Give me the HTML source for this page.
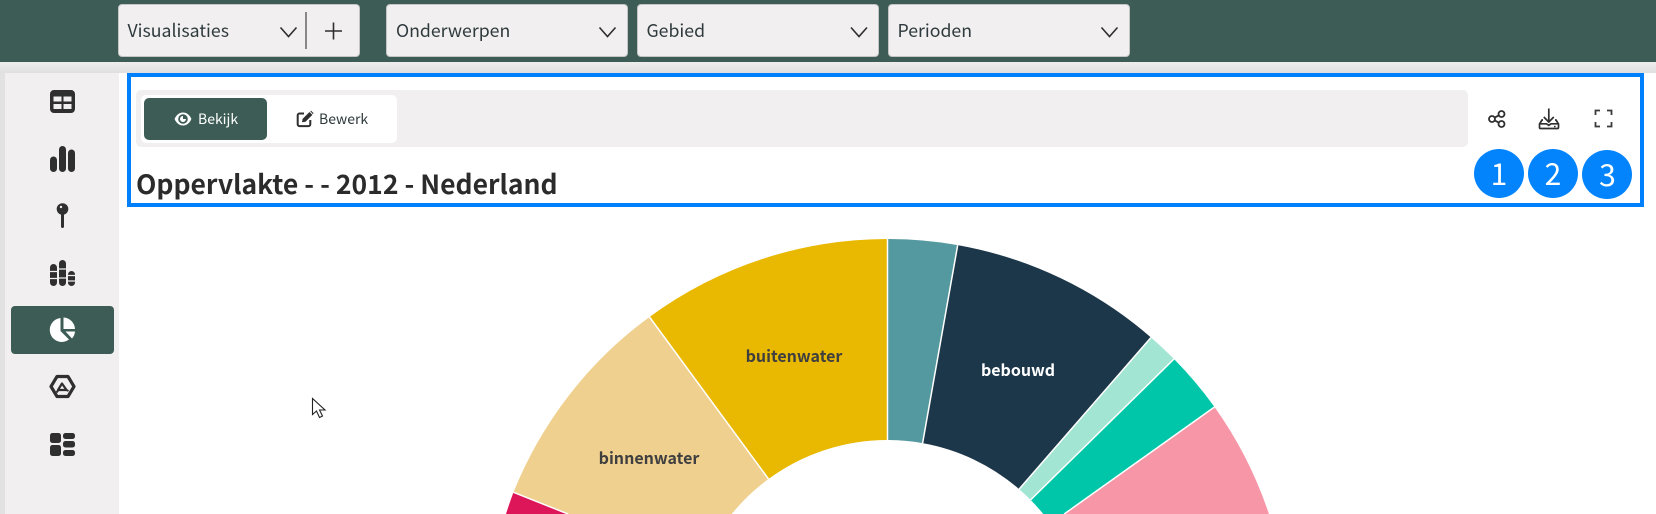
<!DOCTYPE html>
<html lang="nl"><head><meta charset="utf-8"><title>Oppervlakte</title>
<style>
*{box-sizing:border-box;margin:0;padding:0}
html,body{width:1656px;height:514px;overflow:hidden;background:#fff}
body{position:relative;font-family:"Noto Sans CJK JP","Liberation Sans",sans-serif;color:#2f2f2f}
.a{position:absolute}
.t{position:absolute;white-space:nowrap}
.sel{position:absolute;top:4px;height:53px;background:#f1eff0;border:1px solid #c4c4c4;border-radius:4px}
.lbl{position:absolute;top:62px;height:11px;left:0;width:1656px;background:linear-gradient(#eeeeee,#dfdfdf)}
.st{font-size:17.700px;line-height:24px;top:18px;color:#2f3a3c}
svg{position:absolute;display:block}
</style></head><body>
<div class="a" style="left:0;top:0;width:1656px;height:62px;background:#3c5c55"></div>
<div class="lbl"></div>
<div class="a" style="left:0;top:73px;width:5px;height:441px;background:#e2e2e2"></div>
<div class="a" style="left:5px;top:73px;width:114px;height:441px;background:#f1eff0"></div>

<div class="sel" style="left:118px;width:242px"></div>
<div class="sel" style="left:386px;width:242px"></div>
<div class="sel" style="left:637px;width:242px"></div>
<div class="sel" style="left:888px;width:242px"></div>
<div class="t st" style="left:127.5px">Visualisaties</div>
<div class="t st" style="left:396px">Onderwerpen</div>
<div class="t st" style="left:646.5px">Gebied</div>
<div class="t st" style="left:897.5px">Perioden</div>
<svg style="left:0;top:0" width="1656" height="62" fill="none" stroke="#2f2f2f" stroke-width="1.600">
<path d="M280.500 27.500l8 9 8-9M599.500 27.500l8 9 8-9M851 27.500l8 9 8-9M1101.500 27.500l8 9 8-9"/>
<path d="M306 12v37" stroke="#6e6e6e" stroke-width="1.600"/>
<path d="M333.500 22.500v17M325 31h17" stroke-width="1.600"/>
</svg>

<!-- blue box -->
<div class="a" style="left:127px;top:73px;width:1517px;height:134px;border:4px solid #0080fd"></div>
<div class="a" style="left:136px;top:90px;width:1332px;height:57px;background:#f1eff0;border-radius:5px"></div>
<div class="a" style="left:141px;top:95px;width:256px;height:48px;background:#fff;border-radius:5px"></div>
<div class="a" style="left:144px;top:98px;width:123px;height:42px;background:#3c5c55;border-radius:5px"></div>
<svg style="left:174px;top:111px" width="18" height="16" viewBox="0 0 18 16"><path fill="#fff" fill-rule="evenodd" d="M9 1.500C5 1.500 1.800 4.700.6 8c1.200 3.300 4.400 6.500 8.400 6.500s7.200-3.200 8.400-6.500C16.200 4.700 13 1.500 9 1.500zM9 12.800A4.800 4.800 0 1 1 9 3.200a4.800 4.800 0 0 1 0 9.600zM9 5a3 3 0 1 0 3 3H9z"/></svg>
<div class="t" style="left:198px;top:109px;font-size:14px;line-height:20px;color:#fff">Bekijk</div>
<svg style="left:296px;top:110px" width="18" height="18" viewBox="0 0 18 18" fill="none"><path d="M8 3.500H3.500A1.800 1.800 0 0 0 1.700 5.300v9a1.800 1.800 0 0 0 1.800 1.800h9a1.800 1.800 0 0 0 1.800-1.800V10" stroke="#2f2f2f" stroke-width="2"/><path fill="#2f2f2f" d="M6 12.300l.6-3.400L13.500 2l2.900 2.900-6.900 6.900zM14.300 1.200l.7-.6 2.600 2.600-.7.900z"/></svg>
<div class="t" style="left:319px;top:109px;font-size:14px;line-height:20px;color:#2f3a3c">Bewerk</div>

<div class="t" style="left:136px;top:165px;font-size:26.500px;line-height:36px;font-weight:700;color:#2b2b2b">Oppervlakte - - 2012 - Nederland</div>

<!-- right icons -->
<svg style="left:1486px;top:108px" width="21" height="21" viewBox="0 0 21 21" fill="none" stroke="#2f2f2f" stroke-width="1.800"><circle cx="6" cy="11" r="3"/><circle cx="15.500" cy="6" r="3"/><circle cx="15.500" cy="16" r="3"/><path d="M8.700 9.600l4.100-2.200M8.700 12.400l4.100 2.200"/></svg>
<svg style="left:1538px;top:107px" width="22" height="23" viewBox="0 0 22 23" fill="none" stroke="#2f2f2f" stroke-width="1.700"><path d="M10.800 1.500v13.500M5.800 10l5 5 5-5"/><path d="M5 13H4L1.500 17v3.500a1 1 0 0 0 1 1h17a1 1 0 0 0 1-1V17L18 13h-1M2 16.800h6.500l2.300 1.500 2.300-1.500H20"/><circle cx="16.800" cy="19.500" r=".9" fill="#2f2f2f" stroke="none"/></svg>
<svg style="left:1594px;top:109px" width="19" height="19" viewBox="0 0 19 19" fill="none" stroke="#3a3a3a" stroke-width="1.800"><path d="M6 1.500H1.500V6M13 1.500h4.500V6M1.500 13v4.500H6M17.500 13v4.500H13"/></svg>

<!-- badges -->
<div class="a" style="left:1474px;top:149px;width:50px;height:49px;border-radius:50%;background:#0384fd"></div>
<div class="a" style="left:1528px;top:149px;width:50px;height:49px;border-radius:50%;background:#0384fd"></div>
<div class="a" style="left:1582px;top:150px;width:50px;height:49px;border-radius:50%;background:#0384fd"></div>
<div class="t" style="left:1474px;width:50px;top:152px;text-align:center;color:#fff;font-size:30px;line-height:40px">1</div>
<div class="t" style="left:1528px;width:50px;top:152px;text-align:center;color:#fff;font-size:30px;line-height:40px">2</div>
<div class="t" style="left:1582.500px;width:50px;top:152.500px;text-align:center;color:#fff;font-size:30px;line-height:40px">3</div>

<!-- sidebar -->
<div class="a" style="left:11px;top:306px;width:103px;height:48px;background:#3c5c55;border-radius:4px"></div>
<svg style="left:0;top:73px" width="119" height="441" viewBox="0 73 119 441" fill="#2f2f2f">
<path fill-rule="evenodd" d="M54 90h17a4 4 0 0 1 4 4v15a4 4 0 0 1-4 4H54a4 4 0 0 1-4-4V94a4 4 0 0 1 4-4zM53.500 96.500v5h8v-5zM63.500 96.500v5h8v-5zM53.500 104v5h8v-5zM63.500 104v5h8v-5z"/>
<rect x="50" y="156.500" width="7" height="15.500" rx="3.500"/><rect x="59" y="146" width="7" height="26" rx="3.500"/><rect x="68" y="149.500" width="7" height="22.500" rx="3.500"/>
<circle cx="62.500" cy="209" r="5.800"/><rect x="61" y="212" width="3" height="16" rx="1.500"/><circle cx="61" cy="207" r="1.200" fill="#f1eff0"/>
<g><rect x="50" y="264" width="7" height="22" rx="3.500"/><rect x="59" y="260" width="7" height="26" rx="3.500"/><rect x="68" y="271" width="7" height="15" rx="3.500"/>
<path d="M50 271.500h7M50 278.500h7M59 269h7M59 278h7M68 275.500h7M68 281h7" stroke="#f1eff0" stroke-width="1.300"/></g>
<path fill="#fff" d="M60.500 318v13l8.500 8.500a12 12 0 1 1-8.500-21.500zM63.500 317.500a12 12 0 0 1 11.500 11.500H63.500zM65.500 331.500h9.500a12 12 0 0 1-3 7z"/>
<path d="M57 376.500h11l6 10-6 10H57l-6-10z" fill="none" stroke="#2f2f2f" stroke-width="3.200" stroke-linejoin="round"/>
<path d="M62 383.500l4.500 6.500H58z" fill="none" stroke="#2f2f2f" stroke-width="2.200" stroke-linejoin="round"/>
<path d="M58 390.500l-1.500 2M66.500 390l2 1" stroke="#2f2f2f" stroke-width="2" fill="none"/>
<rect x="50" y="433" width="11" height="10" rx="2.500"/><rect x="50" y="445" width="11" height="11" rx="2.500"/><rect x="63" y="433" width="12" height="6" rx="2.500"/><rect x="63" y="441" width="12" height="6.500" rx="2.500"/><rect x="63" y="450" width="12" height="6" rx="2.500"/>
</svg>

<!-- donut -->
<svg style="left:0;top:0" width="1656" height="514" viewBox="0 0 1656 514">
<path fill="#e9b800" d="M887.500 239A402 402 0 0 0 649.500 317L768.500 479A201 201 0 0 1 887.500 440Z"/>
<path fill="#efd08f" d="M649.500 317A402 402 0 0 0 513.500 492.300L568 514L731.700 514A201 201 0 0 1 768.500 479Z"/>
<path fill="#dc1659" d="M513.500 492.300A402 402 0 0 0 506 514L568 514Z"/>
<path fill="#5499a0" d="M887.500 239A402 402 0 0 1 957.700 245.100L922.600 443.100A201 201 0 0 0 887.500 440Z"/>
<path fill="#1d374a" d="M957.700 245.100A402 402 0 0 1 1151 337.500L1019.100 489.100A201 201 0 0 0 922.600 443.100Z"/>
<path fill="#a2e5d2" d="M1151 337.500A402 402 0 0 1 1174 359L1030.600 499.900A201 201 0 0 0 1019.100 489.100Z"/>
<path fill="#00c6a9" d="M1174 359A402 402 0 0 1 1214.500 407L1064.200 514L1043.300 514A201 201 0 0 0 1030.600 499.900Z"/>
<path fill="#f796a7" d="M1214.500 407A402 402 0 0 1 1268.900 514L1064.200 514Z"/>
<path fill="none" stroke="#fff" stroke-width="1.500" d="M887.500 238V441M649.500 317L768.500 479M513.500 492.300L568 514M957.700 245.100L922.600 443.100M1151 337.500L1019.100 489.100M1174 359L1030.600 499.900M1214.500 407L1064.200 514"/>
</svg>
<div class="t" style="left:694px;width:200px;top:344px;text-align:center;font-size:16px;line-height:22px;font-weight:700;color:#3f3f3f">buitenwater</div>
<div class="t" style="left:549px;width:200px;top:446px;text-align:center;font-size:16px;line-height:22px;font-weight:700;color:#3f3f3f">binnenwater</div>
<div class="t" style="left:918px;width:200px;top:358px;text-align:center;font-size:16px;line-height:22px;font-weight:700;color:#fff">bebouwd</div>

<!-- cursor -->
<svg style="left:310px;top:396px" width="20" height="26" viewBox="0 0 20 26"><path d="M2.500 2.500v16l4-3.500 3 6.500 3-1.500-3-6h5.500z" fill="#fff" stroke="#222" stroke-width="1.100"/></svg>
</body></html>
